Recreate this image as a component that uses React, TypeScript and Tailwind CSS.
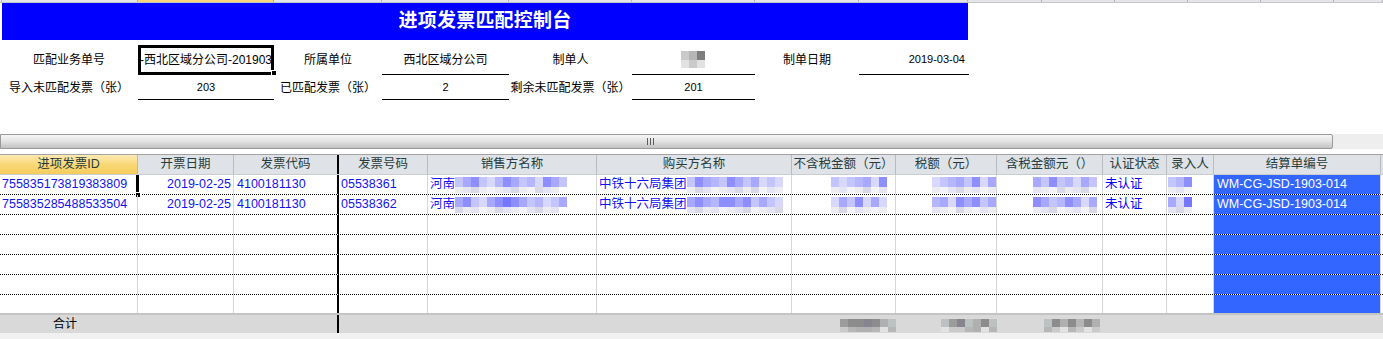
import React from 'react';

const PAL: Record<string, string> = {
  a: 'bg-[#c4c4ff]',
  b: 'bg-[#a8a8ff]',
  c: 'bg-[#8e8eff]',
  d: 'bg-[#d8d8ff]',
  e: 'bg-[#b6b6ff]',
  f: 'bg-[#7676ff]',
  g: 'bg-[#e4e4f2]',
  h: 'bg-[#ededf1]',
  i: 'bg-[#d8d8e6]',
  j: 'bg-[#f4f4f6]',
  k: 'bg-[#9c9c9c]',
  l: 'bg-[#8c8c8c]',
  m: 'bg-[#b0b0b0]',
  n: 'bg-[#86848f]',
  o: 'bg-[#bcc1c1]',
  p: 'bg-[#cacaca]',
  q: 'bg-[#b6b6b6]',
  r: 'bg-[#7e7e7e]',
  s: 'bg-[#e2e2e2]',
};

// pixelated blur, two bands of 8px blocks
const Mosaic: React.FC<{ top: string; bottom: string; tall?: string; short?: string }> = ({
  top,
  bottom,
  tall = 'h-[10px]',
  short = 'h-[6px]',
}) => (
  <div className="flex flex-col shrink-0">
    <div className="flex">
      {top.split('').map((c, i) => (
        <span key={i} className={`w-[8px] ${tall} ${PAL[c]}`} />
      ))}
    </div>
    <div className="flex">
      {bottom.split('').map((c, i) => (
        <span key={i} className={`w-[8px] ${short} ${PAL[c]}`} />
      ))}
    </div>
  </div>
);

const topStrip = [
  'w-[2px]', 'w-[136px]', 'w-[136px]', 'w-[108px]', 'w-[127px]', 'w-[123px]', 'w-[123px]',
  'w-[104px]', 'w-[109px]', 'w-[74px]', 'w-[73px]', 'w-[73px]', 'w-[73px]', 'w-[73px]', 'w-[49px]',
];

const colW = [
  'w-[138px]', 'w-[96px]', 'w-[105px]', 'w-[89px]', 'w-[169px]', 'w-[195px]',
  'w-[104px]', 'w-[101px]', 'w-[106px]', 'w-[64px]', 'w-[47px]', 'w-[167px]',
];

const headers = [
  '进项发票ID', '开票日期', '发票代码', '发票号码', '销售方名称', '购买方名称',
  '不含税金额（元）', '税额（元）', '含税金额元（）', '认证状态', '录入人', '结算单编号',
];

const invoices = [
  {
    id: '755835173819383809',
    date: '2019-02-25',
    code: '4100181130',
    no: '05538361',
    seller: ['abcadecbaedcba', 'hgihjhgihjigh'],
    buyer: ['acbeacbabdad', 'higjhgihijgh'],
    net: ['adaebdc', 'hgjhijg'],
    tax: ['daebacdb', 'hjgihgjh'],
    gross: ['bacaedba', 'ghjihgij'],
    user: ['aec', 'hgj'],
  },
  {
    id: '755835285488533504',
    date: '2019-02-25',
    code: '4100181130',
    no: '05538362',
    seller: ['bcadbcfcbaedab', 'ihgjhighjgihg'],
    buyer: ['bcbeccbcabad', 'gihgjhgijhgi'],
    net: ['dbacdbd', 'hijghjh'],
    tax: ['ebdcbcab', 'ghjihjgh'],
    gross: ['cbaecbdb', 'hgijhgji'],
    user: ['bdf', 'gih'],
  },
];

const cellBase = 'h-full flex items-center overflow-hidden whitespace-nowrap shrink-0';
const border = (i: number) => (i === 2 ? 'border-r-2 border-black' : 'border-r border-[#d6d6d6]');

const App: React.FC = () => {
  return (
    <div className="w-[1383px] h-[339px] bg-white overflow-hidden font-['Liberation_Sans','Noto_Sans_CJK_SC',sans-serif] text-black">
      {/* cut-off sheet column headers */}
      <div className="flex h-[3px] bg-[#e3e5e8] border-b border-[#c4c6ca]">
        {topStrip.map((w, i) => (
          <div
            key={i}
            className={`${w} h-full border-r border-[#b4b6ba] ${i === 2 ? 'bg-[#f7d67c] border-[#d9a640]' : ''}`}
          />
        ))}
      </div>

      {/* title banner */}
      <div className="ml-[2px] w-[966px] h-[37px] bg-[#0000ff] flex items-center justify-center">
        <span className="text-white font-bold text-[19px] tracking-[0.2px]">进项发票匹配控制台</span>
      </div>

      {/* form */}
      <div className="flex h-[35px] pt-[5px] text-[12px]">
        <div className="w-[138px] flex items-center justify-center">匹配业务单号</div>
        <div className="w-[136px] h-[30px] relative">
          <div className="h-full border-[3px] border-black flex items-center justify-center overflow-hidden whitespace-nowrap">
            <span>-西北区域分公司-201903</span>
          </div>
          <div className="absolute right-[-3px] bottom-[-1px] w-[6px] h-[6px] bg-black border border-white" />
        </div>
        <div className="w-[108px] flex items-center justify-center">所属单位</div>
        <div className="w-[127px] flex items-center justify-center border-b border-black">西北区域分公司</div>
        <div className="w-[123px] flex items-center justify-center">制单人</div>
        <div className="w-[123px] flex items-center justify-center border-b border-black">
          <div className="ml-[-2px]">
            <Mosaic top="pqr" bottom="sps" tall="h-[9px]" short="h-[8px]" />
          </div>
        </div>
        <div className="w-[104px] flex items-center justify-center">制单日期</div>
        <div className="w-[110px] flex items-center justify-end pr-[4px] border-b border-black text-[11px]">2019-03-04</div>
      </div>
      <div className="flex h-[25px] text-[12px]">
        <div className="w-[138px] flex items-center justify-center">导入未匹配发票（张）</div>
        <div className="w-[136px] flex items-center justify-center border-b border-black text-[11px]">203</div>
        <div className="w-[108px] flex items-center justify-center">已匹配发票（张）</div>
        <div className="w-[127px] flex items-center justify-center border-b border-black text-[11px]">2</div>
        <div className="w-[123px] flex items-center justify-center">剩余未匹配发票（张）</div>
        <div className="w-[123px] flex items-center justify-center border-b border-black text-[11px]">201</div>
      </div>

      <div className="h-[34px]" />

      {/* horizontal splitter / scroll bar */}
      <div className="flex h-[15px]">
        <div className="w-[1333px] h-full border border-[#9a9a9a] rounded-r-[2px] bg-linear-to-b from-[#f6f6f6] via-[#e2e2e2] to-[#c2c2c2] flex items-center">
          <div className="ml-[646px] flex gap-[2px]">
            <span className="w-[1px] h-[7px] bg-[#5a5a5a]" />
            <span className="w-[1px] h-[7px] bg-[#5a5a5a]" />
            <span className="w-[1px] h-[7px] bg-[#5a5a5a]" />
          </div>
        </div>
        <div className="flex-1 h-full bg-[#eeeeee]" />
      </div>

      <div className="h-[5px]" />

      {/* grid header */}
      <div className="flex h-[21px] border-t border-[#a4a4a4] border-b border-b-[#c9cdd1] bg-[#dfe2e6] text-[12.5px] text-[#263c3c]">
        {headers.map((h, i) => (
          <div
            key={h}
            className={`${colW[i]} ${cellBase} justify-center ${
              i === 2 ? 'border-r-2 border-black' : 'border-r border-[#b8bcc1]'
            } ${i === 0 ? 'bg-linear-to-b from-[#fdeab2] via-[#f9d877] to-[#f6cd5c]' : ''}`}
          >
            {h}
          </div>
        ))}
      </div>

      {/* grid rows */}
      <div className="text-[12.5px] text-[#1212ee]">
        {[0, 1, 2, 3, 4, 5, 6].map((r) => {
          const inv = invoices[r];
          const last = r === 6;
          return (
            <div
              key={r}
              className={`flex ${last ? 'h-[18px]' : 'h-[20px] border-b border-dotted border-black'}`}
            >
              <div className={`${colW[0]} ${cellBase} ${border(0)} pl-[2px] relative overflow-visible`}>
                {inv?.id}
                {r === 0 && (
                  <>
                    <div className="absolute right-[-2px] top-0 h-[20px] w-[3px] bg-black" />
                    <div className="absolute right-[-4px] bottom-[-4px] w-[6px] h-[6px] bg-black border border-white" />
                  </>
                )}
              </div>
              <div className={`${colW[1]} ${cellBase} ${border(1)} justify-end pr-[2px]`}>{inv?.date}</div>
              <div className={`${colW[2]} ${cellBase} ${border(2)} pl-[3px]`}>{inv?.code}</div>
              <div className={`${colW[3]} ${cellBase} ${border(3)} pl-[2px]`}>{inv?.no}</div>
              <div className={`${colW[4]} ${cellBase} ${border(4)} pl-[2px]`}>
                {inv && (
                  <>
                    <span>河南</span>
                    <Mosaic top={inv.seller[0]} bottom={inv.seller[1]} />
                  </>
                )}
              </div>
              <div className={`${colW[5]} ${cellBase} ${border(5)} pl-[2px]`}>
                {inv && (
                  <>
                    <span>中铁十六局集团</span>
                    <Mosaic top={inv.buyer[0]} bottom={inv.buyer[1]} />
                  </>
                )}
              </div>
              <div className={`${colW[6]} ${cellBase} ${border(6)} justify-end pr-[8px]`}>
                {inv && <Mosaic top={inv.net[0]} bottom={inv.net[1]} />}
              </div>
              <div className={`${colW[7]} ${cellBase} ${border(7)} justify-end`}>
                {inv && <Mosaic top={inv.tax[0]} bottom={inv.tax[1]} />}
              </div>
              <div className={`${colW[8]} ${cellBase} ${border(8)} justify-end pr-[5px]`}>
                {inv && <Mosaic top={inv.gross[0]} bottom={inv.gross[1]} />}
              </div>
              <div className={`${colW[9]} ${cellBase} ${border(9)} pl-[2px] text-[#0000ff]`}>{inv && '未认证'}</div>
              <div className={`${colW[10]} ${cellBase} ${border(10)} pl-[1px]`}>
                {inv && <Mosaic top={inv.user[0]} bottom={inv.user[1]} />}
              </div>
              <div className={`${colW[11]} ${cellBase} border-r border-[#d6d6d6] bg-[#3366ff] text-white pl-[3px]`}>
                {inv && 'WM-CG-JSD-1903-014'}
              </div>
            </div>
          );
        })}
      </div>

      {/* totals */}
      <div className="flex h-[20px] border-t-2 border-[#c4c4c4] bg-[#d9d9d9] text-[12px]">
        <div className="w-[339px] h-full border-r-2 border-black flex items-center pl-[53px]">合计</div>
        <div className="w-[453px] h-full" />
        <div className="w-[104px] h-full flex items-center justify-end pt-[2px]">
          <Mosaic top="kllnlmo" bottom="pqmmqsq" tall="h-[8px]" short="h-[5px]" />
        </div>
        <div className="w-[101px] h-full flex items-center justify-end pt-[2px]">
          <Mosaic top="oknomlo" bottom="sppqmsq" tall="h-[8px]" short="h-[5px]" />
        </div>
        <div className="w-[106px] h-full flex items-center justify-end pr-[3px] pt-[2px]">
          <Mosaic top="olmlqlm" bottom="qpsqpsp" tall="h-[8px]" short="h-[5px]" />
        </div>
      </div>
      <div className="h-[6px] bg-[#f1f1f1]" />
    </div>
  );
};

export default App;
